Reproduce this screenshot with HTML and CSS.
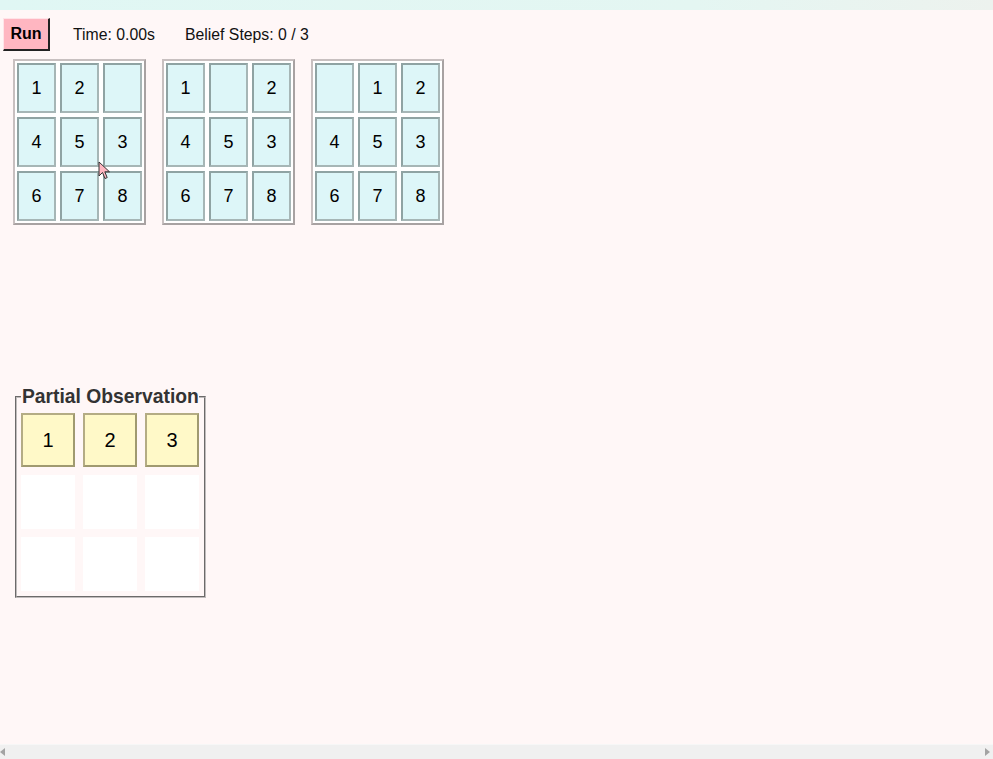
FILE: index.html
```html
<!DOCTYPE html>
<html>
<head>
<meta charset="utf-8">
<link rel="stylesheet" href="styles.css">
</head>
<body>
<div class="page">
<div class="topband"></div>
<div class="controls">
  <button class="run">Run</button>
  <span class="stat">Time: 0.00s</span>
  <span class="stat">Belief Steps: 0 / 3</span>
</div>
<div class="boards">
  <div class="board">
    <div class="tile">1</div><div class="tile">2</div><div class="tile"></div>
    <div class="tile">4</div><div class="tile">5</div><div class="tile">3</div>
    <div class="tile">6</div><div class="tile">7</div><div class="tile">8</div>
  </div>
  <div class="board">
    <div class="tile">1</div><div class="tile"></div><div class="tile">2</div>
    <div class="tile">4</div><div class="tile">5</div><div class="tile">3</div>
    <div class="tile">6</div><div class="tile">7</div><div class="tile">8</div>
  </div>
  <div class="board">
    <div class="tile"></div><div class="tile">1</div><div class="tile">2</div>
    <div class="tile">4</div><div class="tile">5</div><div class="tile">3</div>
    <div class="tile">6</div><div class="tile">7</div><div class="tile">8</div>
  </div>
</div>
<fieldset class="obs">
  <legend>Partial Observation</legend>
  <div class="obs-grid">
    <div class="otile seen">1</div><div class="otile seen">2</div><div class="otile seen">3</div>
    <div class="otile"></div><div class="otile"></div><div class="otile"></div>
    <div class="otile"></div><div class="otile"></div><div class="otile"></div>
  </div>
</fieldset>
<svg class="cursor" width="14" height="20" viewBox="0 0 14 20">
  <path d="M1 1 L1 15 L4.5 11.5 L7 17.5 L9.2 16.6 L6.8 10.8 L11.5 10.8 Z" fill="#ffb6c1" stroke="#333" stroke-width="1"/>
</svg>
</div>
<div class="hscroll">
  <span class="arrow left"></span>
  <span class="arrow right"></span>
</div>
</body>
</html>
```
FILE: styles.css
```css
html, body {
  margin: 0;
  padding: 0;
  overflow: hidden;
}
body {
  background: #fff7f7;
  font-family: "Liberation Sans", Arial, sans-serif;
  color: #111;
}
.page {
  height: 744px;
  position: relative;
}
.topband {
  height: 10px;
  background: linear-gradient(to right, #e0f7f4, #e4f6f2 70%, #edf2ee);
}
.controls {
  display: flex;
  align-items: center;
  height: 33px;
  margin-top: 8px;
  padding-left: 3px;
}
.run {
  width: 47px;
  height: 33px;
  background: #ffb6c1;
  border-style: solid;
  border-width: 1px 2px 2px 1px;
  border-color: #ffe4e8 #222 #222 #ffe4e8;
  font-family: "Liberation Sans", Arial, sans-serif;
  font-weight: bold;
  font-size: 16px;
  color: #000;
  padding: 0;
  margin-right: 23px;
}
.stat {
  font-size: 15.8px;
  margin-right: 30px;
}
.boards {
  display: flex;
  gap: 16px;
  padding-left: 13px;
  margin-top: 8px;
}
.board {
  display: grid;
  grid-template-columns: repeat(3, 39px);
  grid-template-rows: repeat(3, 50px);
  gap: 4px;
  padding: 2px;
  border: 2px solid;
  border-color: #c8c0c0 #a8a2a2 #a8a2a2 #c8c0c0;
  background: #fff;
}
.tile {
  box-sizing: border-box;
  background: #ddf6f8;
  border: 2px solid;
  border-color: #8fa3a3 #a6b6b6 #a6b6b6 #8fa3a3;
  display: flex;
  align-items: center;
  justify-content: center;
  font-size: 18px;
  color: #000;
}
.obs {
  margin: 161px 0 0 15px;
  padding: 5px 5px 5px 4px;
  width: 178px;
  border: 2px groove #c0bcbc;
}
.obs legend {
  font-weight: bold;
  font-size: 19.3px;
  color: #333;
  padding: 0 0 0 1px;
  line-height: 22px;
  white-space: nowrap;
}
.obs-grid {
  display: grid;
  grid-template-columns: repeat(3, 54px);
  grid-template-rows: repeat(3, 54px);
  gap: 8px;
}
.otile {
  box-sizing: border-box;
  background: #fff;
  display: flex;
  align-items: center;
  justify-content: center;
  font-size: 20px;
  color: #000;
}
.otile.seen {
  background: #fff9c8;
  border: 2px solid;
  border-color: #b4ac84 #a09a70 #a09a70 #b4ac84;
}
.cursor {
  position: absolute;
  left: 98px;
  top: 161px;
}
.hscroll {
  height: 15px;
  background: #f0f0f0;
  border-top: 1px solid #f7f7f7;
  box-sizing: border-box;
  display: flex;
  justify-content: space-between;
  align-items: center;
  padding: 0 3px 0 0;
}
.arrow {
  width: 0;
  height: 0;
  border-top: 4px solid transparent;
  border-bottom: 4px solid transparent;
}
.arrow.left {
  border-right: 5px solid #a3a3a3;
}
.arrow.right {
  border-left: 5px solid #a3a3a3;
}
```
